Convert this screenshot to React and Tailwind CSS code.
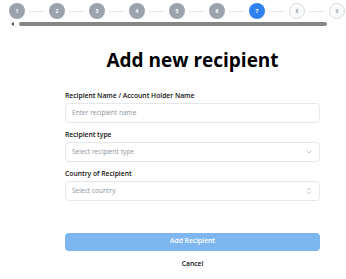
import React from "react";
import { ChevronDown, ChevronsUpDown } from "lucide-react";

function Step({ n, state, last }) {
  const cls =
    state === "done"
      ? "bg-[#9ca3af] text-white"
      : state === "active"
      ? "bg-[#2f80f0] text-white"
      : "bg-[#f9fafb] text-[#9ca3af] border border-[#d9dce1]";
  return (
    <div className="flex items-center shrink-0">
      <div
        className={`w-4 h-4 rounded-full flex items-center justify-center text-[5px] font-bold leading-none ${cls}`}
      >
        {n}
      </div>
      {!last && <div className="mx-1 w-4 h-px bg-[#e5e7eb]" />}
    </div>
  );
}

function Field({ label, children }) {
  return (
    <div className="flex flex-col">
      <div className="text-[6.75px] leading-[10px] font-semibold text-[#111] mb-[1.5px]">{label}</div>
      {children}
    </div>
  );
}

export default function App() {
  const steps = [1, 2, 3, 4, 5, 6, 7, 8, 9];
  return (
    <div className="w-[346px] h-[279px] bg-white overflow-hidden font-['Open_Sans',sans-serif]">
      <div className="flex items-center pt-[3px] pl-[9px]">
        {steps.map((n) => (
          <Step
            key={n}
            n={n}
            last={n === 9}
            state={n < 7 ? "done" : n === 7 ? "active" : "future"}
          />
        ))}
      </div>
      <div className="flex items-center mt-[3px] h-[4px]">
        <div className="ml-[11px] w-0 h-0 border-y-[2px] border-y-transparent border-r-[3px] border-r-[#555]" />
        <div className="ml-[5px] w-[308px] h-[4px] rounded-full bg-[#858585]" />
      </div>

      <div className="ml-[65px] w-[255px] flex flex-col">
        <h1 className="mt-[22px] text-center text-[19px] leading-[24px] font-bold text-black">
          Add new recipient
        </h1>

        <div className="mt-[19px] flex flex-col gap-[7.5px]">
          <Field label="Recipient Name / Account Holder Name">
            <div className="h-[20px] rounded-[4px] border border-[#e5e7eb] bg-white px-[6px] flex items-center text-[6.6px] text-[#8e939b]">
              Enter recipient name
            </div>
          </Field>
          <Field label="Recipient type">
            <div className="h-[20px] rounded-[4px] border border-[#e5e7eb] bg-white px-[6px] flex items-center justify-between text-[6.6px] text-[#8e939b]">
              <span>Select recipient type</span>
              <ChevronDown size={8} strokeWidth={2} className="text-[#9ca3af]" />
            </div>
          </Field>
          <Field label="Country of Recipient">
            <div className="h-[20px] rounded-[4px] border border-[#e5e7eb] bg-white px-[6px] flex items-center justify-between text-[6.6px] text-[#8e939b]">
              <span>Select country</span>
              <ChevronsUpDown size={8} strokeWidth={2} className="text-[#9ca3af]" />
            </div>
          </Field>
        </div>

        <button className="mt-[32px] h-[18px] rounded-[4px] bg-[#7eb6ef] text-white text-[6.75px] font-semibold flex items-center justify-center">
          Add Recipient
        </button>
        <div className="mt-[8px] text-center text-[6.75px] leading-[10px] font-semibold text-[#111]">
          Cancel
        </div>
      </div>
    </div>
  );
}
